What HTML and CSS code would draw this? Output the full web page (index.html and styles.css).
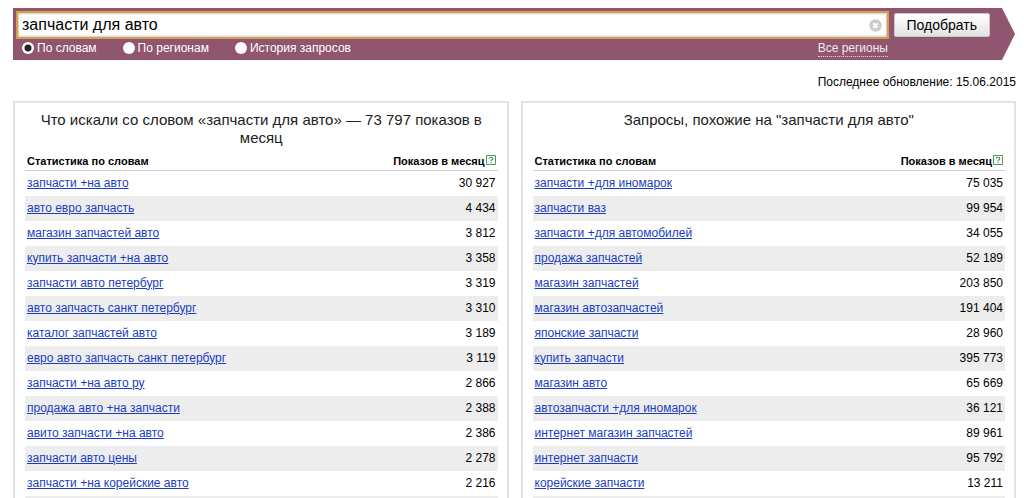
FILE: index.html
```html
<!DOCTYPE html>
<html lang="ru">
<head>
<meta charset="utf-8">
<meta name="viewport" content="width=device-width, initial-scale=1">
<title>Подбор слов</title>
<link rel="stylesheet" href="styles.css">
</head>
<body>
<form class="search">
  <div class="search-row">
    <div class="search-box">
      <input class="search-input" type="text" aria-label="Запрос" value="запчасти для авто">
      <button class="search-clear" type="reset" aria-label="Очистить">
        <svg width="13" height="13" viewBox="0 0 13 13"><circle cx="6.5" cy="6.5" r="6.2" fill="#ccc"/><path d="M4.3 4.3l4.4 4.4M8.7 4.3l-4.4 4.4" stroke="#fff" stroke-width="2"/></svg>
      </button>
    </div>
    <button class="search-submit" type="submit">Подобрать</button>
  </div>
  <div class="options">
    <label class="option"><input type="radio" name="mode" checked>По словам</label>
    <label class="option"><input type="radio" name="mode">По регионам</label>
    <label class="option"><input type="radio" name="mode">История запросов</label>
    <a class="regions" href="#">Все регионы</a>
  </div>
</form>
<main class="content">
  <p class="updated">Последнее обновление: 15.06.2015</p>
  <div class="panels">
    <section class="panel">
      <h2 class="title">Что искали со словом «запчасти для авто» — 73 797 показов в месяц</h2>
      <table class="stats">
        <thead><tr><th>Статистика по словам</th><th class="count">Показов в месяц<a class="help" href="#" aria-label="Справка"><svg width="10" height="10" viewBox="0 0 10 10"><path d="M.5.5h9v9h-9z" fill="#fff" stroke="#4f9462"/><path d="M3.3 3.7c0-2 3.5-2 3.5 0 0 1.1-1.8 1-1.8 2.3M5 7v1" fill="none" stroke="#3f8752" stroke-width="1.1"/></svg></a></th></tr></thead>
        <tbody>
          <tr><td><a href="#">запчасти +на авто</a></td><td class="count">30 927</td></tr>
          <tr><td><a href="#">авто евро запчасть</a></td><td class="count">4 434</td></tr>
          <tr><td><a href="#">магазин запчастей авто</a></td><td class="count">3 812</td></tr>
          <tr><td><a href="#">купить запчасти +на авто</a></td><td class="count">3 358</td></tr>
          <tr><td><a href="#">запчасти авто петербург</a></td><td class="count">3 319</td></tr>
          <tr><td><a href="#">авто запчасть санкт петербург</a></td><td class="count">3 310</td></tr>
          <tr><td><a href="#">каталог запчастей авто</a></td><td class="count">3 189</td></tr>
          <tr><td><a href="#">евро авто запчасть санкт петербург</a></td><td class="count">3 119</td></tr>
          <tr><td><a href="#">запчасти +на авто ру</a></td><td class="count">2 866</td></tr>
          <tr><td><a href="#">продажа авто +на запчасти</a></td><td class="count">2 388</td></tr>
          <tr><td><a href="#">авито запчасти +на авто</a></td><td class="count">2 386</td></tr>
          <tr><td><a href="#">запчасти авто цены</a></td><td class="count">2 278</td></tr>
          <tr><td><a href="#">запчасти +на корейские авто</a></td><td class="count">2 216</td></tr>
          <tr><td></td><td></td></tr>
        </tbody>
      </table>
    </section>
    <section class="panel">
      <h2 class="title">Запросы, похожие на "запчасти для авто"</h2>
      <table class="stats">
        <thead><tr><th>Статистика по словам</th><th class="count">Показов в месяц<a class="help" href="#" aria-label="Справка"><svg width="10" height="10" viewBox="0 0 10 10"><path d="M.5.5h9v9h-9z" fill="#fff" stroke="#4f9462"/><path d="M3.3 3.7c0-2 3.5-2 3.5 0 0 1.1-1.8 1-1.8 2.3M5 7v1" fill="none" stroke="#3f8752" stroke-width="1.1"/></svg></a></th></tr></thead>
        <tbody>
          <tr><td><a href="#">запчасти +для иномарок</a></td><td class="count">75 035</td></tr>
          <tr><td><a href="#">запчасти ваз</a></td><td class="count">99 954</td></tr>
          <tr><td><a href="#">запчасти +для автомобилей</a></td><td class="count">34 055</td></tr>
          <tr><td><a href="#">продажа запчастей</a></td><td class="count">52 189</td></tr>
          <tr><td><a href="#">магазин запчастей</a></td><td class="count">203 850</td></tr>
          <tr><td><a href="#">магазин автозапчастей</a></td><td class="count">191 404</td></tr>
          <tr><td><a href="#">японские запчасти</a></td><td class="count">28 960</td></tr>
          <tr><td><a href="#">купить запчасти</a></td><td class="count">395 773</td></tr>
          <tr><td><a href="#">магазин авто</a></td><td class="count">65 669</td></tr>
          <tr><td><a href="#">автозапчасти +для иномарок</a></td><td class="count">36 121</td></tr>
          <tr><td><a href="#">интернет магазин запчастей</a></td><td class="count">89 961</td></tr>
          <tr><td><a href="#">интернет запчасти</a></td><td class="count">95 792</td></tr>
          <tr><td><a href="#">корейские запчасти</a></td><td class="count">13 211</td></tr>
          <tr><td></td><td></td></tr>
        </tbody>
      </table>
    </section>
  </div>
</main>
</body>
</html>
```
FILE: styles.css
```css
* { box-sizing: border-box; }
html { scrollbar-width: none; }
body {
  height: 100vh;
  margin: 0;
  padding: 8px 8px 0 13px;
  overflow: hidden;
  background: #fff;
  color: #000;
  font: 12px/16px "Liberation Sans", Arial, sans-serif;
}
.search {
  margin-right: 1px;
  padding: 3px 12px 3px 3px;
  background: #90566f;
  clip-path: polygon(0 0, calc(100% - 13px) 0, 100% 50%, calc(100% - 13px) 100%, 0 100%);
}
.search-row {
  display: flex;
  align-items: center;
  gap: 5px;
  padding-right: 13px;
}
.search-box {
  display: flex;
  flex: 1;
  align-items: center;
  height: 28px;
  padding: 0 5px 0 4px;
  border: 2px solid #d4a04c;
  background: #fff;
  box-shadow: inset 0 0 2px 1px #ccc;
}
.search-input {
  flex: 1;
  min-width: 0;
  padding: 0;
  border: 0;
  outline: 0;
  background: transparent;
  color: #000;
  font: 16px/20px "Liberation Sans", Arial, sans-serif;
}
.search-clear {
  display: flex;
  padding: 0;
  border: 0;
  background: none;
}
.search-submit {
  height: 24px;
  padding: 0 12px;
  border: 1px solid #d0c4ca;
  border-radius: 2px;
  background: linear-gradient(#fff, #e2e2e2);
  color: #000;
  font: 14px/20px "Liberation Sans", Arial, sans-serif;
}
.options {
  display: flex;
  align-items: center;
  gap: 26px;
  height: 18px;
  padding: 0 115px 0 6px;
  color: #fff;
}
.option {
  display: flex;
  align-items: center;
  gap: 3px;
}
.option input {
  width: 12px;
  height: 12px;
  margin: 0;
  border-radius: 50%;
  background: #fff;
  appearance: none;
}
.option input:checked {
  background: radial-gradient(circle, #222 3px, #fff 4px);
}
.regions {
  margin-left: auto;
  border-bottom: 1px dotted #e3d2da;
  color: #f4e8ee;
  text-decoration: none;
}
.updated {
  margin: 14px 0 11px;
  text-align: right;
}
.panels {
  display: grid;
  grid-template-columns: 1fr 1fr;
  gap: 12px;
}
.panel {
  display: flex;
  flex-direction: column;
  padding: 8px 9px 10px 10px;
  border: 2px solid #e2e2e2;
}
.title {
  min-height: 36px;
  margin: 0 12px 6px;
  color: #222;
  font-size: 15px;
  font-weight: 400;
  line-height: 18px;
  text-align: center;
}
.stats {
  width: 100%;
  border-collapse: separate;
  border-spacing: 0;
}
.stats th {
  height: 18px;
  padding: 0 2px 2px;
  border-bottom: 1px solid #cfcbd9;
  font-size: 11px;
  line-height: 14px;
  text-align: left;
}
.stats td {
  height: 25px;
  padding: 0 2px 2px;
}
.stats tbody tr:nth-child(even) { background: #ededed; }
.stats td a { color: #1a3dc1; }
.stats .count { text-align: right; }
.help {
  display: inline-block;
  margin-left: 1px;
  line-height: 10px;
}
```
